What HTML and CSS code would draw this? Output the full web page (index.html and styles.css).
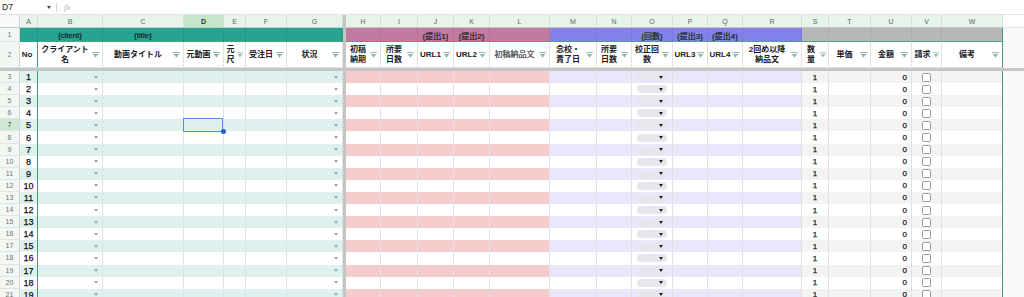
FILE: index.html
```html
<!DOCTYPE html>
<html lang="ja">
<head>
<meta charset="utf-8">
<title>Sheet</title>
<link rel="stylesheet" href="styles.css">
</head>
<body>
<svg class="defs" width="0" height="0" aria-hidden="true">
  <symbol id="fi" viewBox="0 0 8 7"><rect x="0" y="0" width="8" height="1.2"/><path d="M0.6 2.4H7.4L4 6.6Z"/></symbol>
</svg>
<div class="formula-bar">
  <span class="namebox">D7</span>
  <span class="nb-caret"></span>
  <span class="fb-div"></span>
  <span class="fx">fx</span>
</div>
<div class="sheet">
  <div class="row hdr">
    <div class="corner"></div>
    <div class="ch">A</div><div class="ch">B</div><div class="ch">C</div><div class="ch sel">D</div><div class="ch">E</div><div class="ch">F</div><div class="ch">G</div>
    <div class="fz"></div>
    <div class="ch">H</div><div class="ch">I</div><div class="ch">J</div><div class="ch">K</div><div class="ch">L</div><div class="ch">M</div><div class="ch">N</div><div class="ch">O</div><div class="ch">P</div><div class="ch">Q</div><div class="ch">R</div><div class="ch">S</div><div class="ch">T</div><div class="ch">U</div><div class="ch">V</div><div class="ch">W</div>
    <div class="fill"></div>
  </div>
  <div class="row r1">
    <div class="rh">1</div>
    <div class="c t1"></div><div class="c t1 tb">{client}</div><div class="c t1 tb">{title}</div><div class="c t1 tb"></div><div class="c t1 tb"></div><div class="c t1 tb"></div><div class="c t1 tb"></div>
    <div class="fz"></div>
    <div class="c m1 tb"></div><div class="c m1 tb"></div><div class="c m1 tb">{提出1}</div><div class="c m1 tb">{提出2}</div><div class="c m1 tb"></div>
    <div class="c p1 tb"></div><div class="c p1 tb"></div><div class="c p1 tb">{回数}</div><div class="c p1 tb">{提出3}</div><div class="c p1 tb">{提出4}</div><div class="c p1 tb"></div>
    <div class="c g1 tb"></div><div class="c g1 tb"></div><div class="c g1 tb"></div><div class="c g1 tb"></div><div class="c g1 tb edge"></div>
    <div class="fill"></div>
  </div>
  <div class="row r2">
    <div class="rh">2</div>
    <div class="c h2 colA"><span class="ht">No</span></div>
    <div class="c h2"><span class="ht">クライアント<br>名</span><svg class="fi"><use href="#fi"/></svg></div>
    <div class="c h2"><span class="ht">動画タイトル</span><svg class="fi"><use href="#fi"/></svg></div>
    <div class="c h2"><span class="ht">元動画</span><svg class="fi"><use href="#fi"/></svg></div>
    <div class="c h2 narrow"><span class="ht">元<br>尺</span><svg class="fi"><use href="#fi"/></svg></div>
    <div class="c h2"><span class="ht">受注日</span><svg class="fi"><use href="#fi"/></svg></div>
    <div class="c h2"><span class="ht">状況</span><svg class="fi"><use href="#fi"/></svg></div>
    <div class="fz"></div>
    <div class="c h2"><span class="ht">初稿<br>納期</span><svg class="fi"><use href="#fi"/></svg></div>
    <div class="c h2"><span class="ht">所要<br>日数</span><svg class="fi"><use href="#fi"/></svg></div>
    <div class="c h2"><span class="ht">URL1</span><svg class="fi"><use href="#fi"/></svg></div>
    <div class="c h2"><span class="ht">URL2</span><svg class="fi"><use href="#fi"/></svg></div>
    <div class="c h2"><span class="ht light">初稿納品文</span><svg class="fi"><use href="#fi"/></svg></div>
    <div class="c h2"><span class="ht">念校・<br>責了日</span><svg class="fi"><use href="#fi"/></svg></div>
    <div class="c h2"><span class="ht">所要<br>日数</span><svg class="fi"><use href="#fi"/></svg></div>
    <div class="c h2"><span class="ht">校正回<br>数</span><svg class="fi"><use href="#fi"/></svg></div>
    <div class="c h2"><span class="ht">URL3</span><svg class="fi"><use href="#fi"/></svg></div>
    <div class="c h2"><span class="ht">URL4</span><svg class="fi"><use href="#fi"/></svg></div>
    <div class="c h2"><span class="ht">2回め以降<br>納品文</span><svg class="fi"><use href="#fi"/></svg></div>
    <div class="c h2 narrow"><span class="ht">数<br>量</span><svg class="fi"><use href="#fi"/></svg></div>
    <div class="c h2"><span class="ht">単価</span><svg class="fi"><use href="#fi"/></svg></div>
    <div class="c h2"><span class="ht">金額</span><svg class="fi"><use href="#fi"/></svg></div>
    <div class="c h2 narrow"><span class="ht">請求</span><svg class="fi"><use href="#fi"/></svg></div>
    <div class="c h2 edge"><span class="ht">備考</span><svg class="fi"><use href="#fi"/></svg></div>
    <div class="fill"></div>
  </div>
  <div class="freeze-h"></div>
  <div id="rows" class="rows"></div>
</div>
<script src="script.js"></script>
</body>
</html>
```

FILE: styles.css
```css
* { box-sizing: border-box; }
html, body { margin: 0; padding: 0; }
body {
  width: 1024px;
  height: 297px;
  overflow: hidden;
  background: #fff;
  font-family: "Liberation Sans", "Noto Sans CJK JP", sans-serif;
  color: #202124;
}
.defs { position: absolute; }

.formula-bar {
  height: 15px;
  display: flex;
  align-items: center;
  border-bottom: 1px solid #e3e3e3;
  font-size: 8.5px;
}
.namebox { width: 47px; padding-left: 2px; color: #202124; }
.nb-caret {
  width: 0; height: 0;
  border-left: 2.5px solid transparent;
  border-right: 2.5px solid transparent;
  border-top: 3px solid #444;
  margin-right: 5px;
}
.fb-div { width: 1px; height: 9px; background: #d5d5d5; margin-right: 7px; }
.fx { font-family: "Liberation Serif", serif; font-style: italic; color: #b0b0b0; font-size: 9px; }

.sheet {
  --cols: 20px 18px 65px 81px 40px 22px 41px 56px 3px 35px 37px 36px 36px 60px 47px 35px 41px 35px 35px 59px 27px 42px 41px 30px 61px 1fr;
}
.row { display: grid; grid-template-columns: var(--cols); }
.hdr { height: 13px; }
.r1 { height: 14px; }
.r2 { height: 26px; }
.drow { height: 12.1px; }

.corner { background: #f8f9fa; border-right: 1px solid #d6d6d6; border-bottom: 1px solid #c8c8c8; }
.ch {
  background: #e6f4ea;
  color: #5f6368;
  font-size: 7px;
  display: flex; align-items: center; justify-content: center;
  border-right: 1px solid #cfe0d3;
  border-bottom: 1px solid #c8c8c8;
}
.ch.sel { background: #c6e7cd; color: #1b3d22; font-weight: bold; }
.fz { background: #c4c6c5; }
.fill { background: #f8f9fa; }
.hdr .fill { background: #fff; border-bottom: 1px solid #e6e6e6; }

.rh {
  background: #f3f7f4;
  color: #6f7470;
  font-size: 7px;
  display: flex; align-items: center; justify-content: center;
  border-right: 1px solid #d4d4d4;
  border-bottom: 1px solid #e4e4e4;
}
.rh.cur { background: #cfe8d5; color: #1b3d22; }

.c {
  display: flex; align-items: center;
  overflow: hidden;
  border-right: 1px solid #e2e2e2;
  border-bottom: 1px solid #ececec;
  font-size: 8px;
  white-space: nowrap;
}

.r1 .c { justify-content: center; font-size: 8px; color: #14211f; -webkit-text-stroke: 0.2px #14211f; border-right-color: rgba(0,0,0,0.06); border-bottom: none; }
.t1 { background: #26a391; }
.m1 { background: #c27ba0; }
.p1 { background: #8382ea; }
.g1 { background: #b7b7b7; }
.r1 .tb { box-shadow: inset 0 -1px 0 #4aa878; }

.r2 .c { background: #fff; border-bottom: 1px solid #e2e2e2; }
.h2 { padding-right: 3px; }
.ht {
  flex: 1;
  text-align: center;
  font-weight: bold;
  font-size: 8px;
  line-height: 10px;
  white-space: normal;
  color: #202124;
}
.ht.light { font-weight: normal; color: #3c4043; -webkit-text-stroke: 0.2px #3c4043; }
.fi { width: 7px; height: 6px; flex: none; fill: #8dbdb0; }
.narrow { padding-right: 2px; }
.narrow .fi { width: 6px; }
.colA, .drow .colA { border-right: 1px solid #3f9f6e; }
.edge { border-right: 1px solid #3f9f6e !important; }

.freeze-h { height: 3px; background: #c4c6c5; }

.odd .gt { background: #def1ee; }
.odd .gp { background: #f4cccc; }
.odd .gl { background: #e9e7fc; }
.odd .gg { background: #f3f3f3; }
.drow .c { border-bottom: none; }

.num { justify-content: center; font-size: 9px; color: #111; -webkit-text-stroke: 0.25px #111; }
.dd {
  margin-left: auto; margin-right: 4px;
  width: 0; height: 0;
  border-left: 2.5px solid transparent;
  border-right: 2.5px solid transparent;
  border-top: 3px solid #a3a8ac;
}
.odd .dd { border-top-color: #7fb7ad; }
.chip {
  margin-left: 5px;
  width: 30px; height: 8px;
  border-radius: 4px;
  background: #e6e7ec;
  display: flex; align-items: center; justify-content: flex-end;
  padding-right: 4px;
}
.tri {
  width: 0; height: 0;
  border-left: 2.5px solid transparent;
  border-right: 2.5px solid transparent;
  border-top: 3px solid #202124;
}
.qty { justify-content: center; color: #222; -webkit-text-stroke: 0.25px #222; }
.amt { justify-content: flex-end; padding-right: 4px; color: #222; -webkit-text-stroke: 0.25px #222; }
.chk { justify-content: center; }
.cb { width: 9px; height: 9px; border: 1px solid #9b9b9b; border-radius: 1.5px; background: #fff; }

.selcell { position: relative; overflow: visible; }
.sel-box { position: absolute; left: -1px; top: -1px; right: 0; bottom: -1px; border: 1.5px solid #4f8fe0; }
.sel-dot { position: absolute; right: -3px; bottom: -3px; width: 5px; height: 5px; border-radius: 50%; background: #1a62d3; }
```

FILE: script.js
```js
(function () {
  var groups = [
    ['A', 'gt'], ['B', 'gt'], ['C', 'gt'], ['D', 'gt'], ['E', 'gt'], ['F', 'gt'], ['G', 'gt'],
    ['|', ''],
    ['H', 'gp'], ['I', 'gp'], ['J', 'gp'], ['K', 'gp'], ['L', 'gp'],
    ['M', 'gl'], ['N', 'gl'], ['O', 'gl'], ['P', 'gl'], ['Q', 'gl'], ['R', 'gl'],
    ['S', 'gg'], ['T', 'gg'], ['U', 'gg'], ['V', 'gg'], ['W', 'gg']
  ];
  var html = '';
  for (var i = 0; i < 19; i++) {
    var r = i + 3;
    var odd = i % 2 === 0;
    html += '<div class="row drow' + (odd ? ' odd' : '') + '">';
    html += '<div class="rh' + (r === 7 ? ' cur' : '') + '">' + r + '</div>';
    groups.forEach(function (g) {
      var col = g[0], grp = g[1];
      if (col === '|') { html += '<div class="fz"></div>'; return; }
      var cls = 'c ' + grp;
      var inner = '';
      if (col === 'A') { cls += ' num colA'; inner = String(i + 1); }
      else if (col === 'B' || col === 'G') { inner = '<span class="dd"></span>'; }
      else if (col === 'O') { inner = '<span class="chip"><span class="tri"></span></span>'; }
      else if (col === 'S') { cls += ' qty'; inner = '1'; }
      else if (col === 'U') { cls += ' amt'; inner = '0'; }
      else if (col === 'V') { cls += ' chk'; inner = '<span class="cb"></span>'; }
      else if (col === 'W') { cls += ' edge'; }
      if (col === 'D' && r === 7) { cls += ' selcell'; inner = '<span class="sel-box"></span><span class="sel-dot"></span>'; }
      html += '<div class="' + cls + '">' + inner + '</div>';
    });
    html += '<div class="fill"></div></div>';
  }
  document.getElementById('rows').innerHTML = html;
})();
```
